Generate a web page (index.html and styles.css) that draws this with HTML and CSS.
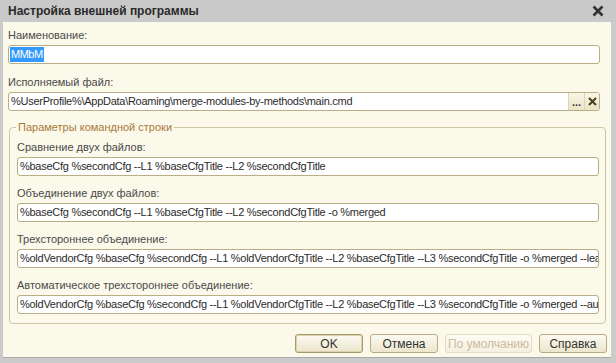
FILE: index.html
```html
<!DOCTYPE html>
<html lang="ru">
<head>
  <meta charset="UTF-8" />
  <title>Настройка внешней программы</title>
  <link rel="stylesheet" href="styles.css">
</head>
<body>

  <div class="window">
    <div class="titlebar">
      <span class="title">Настройка внешней программы</span>
      <svg class="close" width="12" height="12" viewBox="0 0 12 12">
        <path d="M1.5 1.5 L10.5 10.5 M10.5 1.5 L1.5 10.5" stroke="#333" stroke-width="2.6" />
      </svg>
    </div>

    <div class="content">
      <div class="row">
        <div class="label">Наименование:</div>
        <div class="field"><span class="selected">MMbM</span></div>
      </div>

      <div class="row row-next">
        <div class="label">Исполняемый файл:</div>
        <div class="field field-buttons">
          <span class="field-text">%UserProfile%\AppData\Roaming\merge-modules-by-methods\main.cmd</span>
          <span class="field-btn dots">...</span>
          <span class="field-btn clear">
            <svg width="9" height="9" viewBox="0 0 9 9">
              <path d="M1 1 L8 8 M8 1 L1 8" stroke="#4a3f1c" stroke-width="2" />
            </svg>
          </span>
        </div>
      </div>

      <fieldset class="group">
        <legend>Параметры командной строки</legend>

        <div class="label">Сравнение двух файлов:</div>
        <div class="field">%baseCfg %secondCfg --L1 %baseCfgTitle --L2 %secondCfgTitle</div>

        <div class="label label-next">Объединение двух файлов:</div>
        <div class="field">%baseCfg %secondCfg --L1 %baseCfgTitle --L2 %secondCfgTitle -o %merged</div>

        <div class="label label-next">Трехстороннее объединение:</div>
        <div class="field">%oldVendorCfg %baseCfg %secondCfg --L1 %oldVendorCfgTitle --L2 %baseCfgTitle --L3 %secondCfgTitle -o %merged --leave</div>

        <div class="label label-next">Автоматическое трехстороннее объединение:</div>
        <div class="field">%oldVendorCfg %baseCfg %secondCfg --L1 %oldVendorCfgTitle --L2 %baseCfgTitle --L3 %secondCfgTitle -o %merged --auto</div>
      </fieldset>

      <div class="buttons">
        <button class="btn btn-default">OK</button>
        <button class="btn">Отмена</button>
        <button class="btn btn-wide" disabled>По умолчанию</button>
        <button class="btn">Справка</button>
      </div>
    </div>
  </div>

</body>
</html>
```

FILE: styles.css
```css
* {
  box-sizing: border-box;
}

body {
  margin: 0;
  background-color: #cbcbcb;
  font-family: 'Liberation Sans', Arial, sans-serif;
  font-size: 11px;
}

.window {
  width: 616px;
  height: 363px;
  display: flex;
  flex-direction: column;
  background-color: #cbcbcb;
}

.titlebar {
  height: 22px;
  display: flex;
  align-items: center;
  justify-content: space-between;
  padding: 0 12px 0 8px;
  background-color: #c9c9c9;
}

.title {
  font-size: 12px;
  font-weight: bold;
  color: #2a2a2a;
}

.close {
  display: block;
}

.content {
  flex: 1;
  margin: 0 5px 5px 3px;
  padding: 7px 4px 0 5px;
  background-color: #fbf9ea;
  border-bottom: 1px solid #a9a9a9;
}

.row {
  margin-right: 7px;
}

.row-next {
  margin-top: 12px;
}

.label {
  height: 13px;
  line-height: 13px;
  color: #4a4a4a;
  margin-bottom: 3px;
}

.label-next {
  margin-top: 11px;
}

.field {
  height: 19px;
  line-height: 17px;
  padding: 0 2px;
  background-color: #ffffff;
  border: 1px solid #b9ae86;
  border-radius: 3px;
  color: #2b2b2b;
  letter-spacing: -0.27px;
  white-space: nowrap;
  overflow: hidden;
}

.selected {
  display: inline-block;
  line-height: 15px;
  padding: 0 1px;
  margin-left: -1px;
  background-color: #3399ff;
  color: #ffffff;
  letter-spacing: -0.5px;
}

.field-buttons {
  display: flex;
  padding-right: 0;
}

.field-text {
  flex: 1;
  overflow: hidden;
}

.field-btn {
  width: 15px;
  display: flex;
  align-items: center;
  justify-content: center;
  background: linear-gradient(#f8f4e4, #ebe4c9);
  border-left: 1px solid #ddd4b2;
  letter-spacing: 0;
}

.dots {
  width: 16px;
  font-weight: bold;
  color: #333;
  line-height: 20px;
}

.group {
  min-width: 0;
  margin: 10px 1px 0 1px;
  padding: 7px 6px 9px 7px;
  border: 1px solid #cdc5a5;
  border-radius: 4px;
}

.group legend {
  padding: 0 2px;
  margin-left: -1px;
  height: 13px;
  line-height: 13px;
  color: #a87a3a;
}

.buttons {
  display: flex;
  justify-content: flex-end;
  gap: 7px;
  margin-top: 10px;
}

.btn {
  width: 68px;
  height: 19px;
  padding: 0;
  font-family: inherit;
  font-size: 12px;
  color: #333;
  background: linear-gradient(#fcfaf1, #ece6cd);
  border: 1px solid #b8ac82;
  border-radius: 3px;
}

.btn-default {
  border-color: #a69a6c;
  box-shadow: inset 0 0 0 1px #dcd3ae;
}

.btn-wide {
  width: 87px;
}

.btn:disabled {
  color: #cbbc9d;
  border-color: #e2dbc0;
  background: linear-gradient(#fdfcf5, #f4f0e0);
}
```
